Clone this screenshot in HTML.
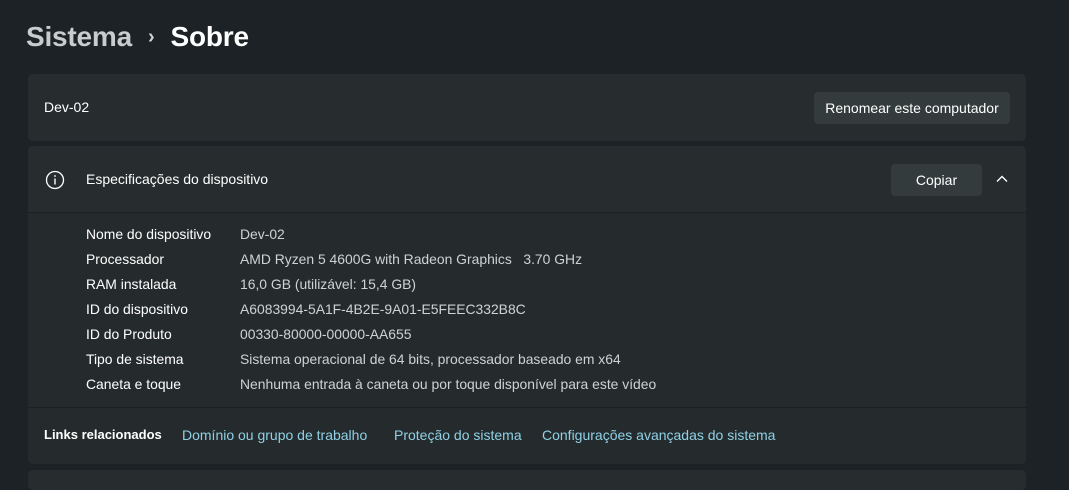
<!DOCTYPE html>
<html><head><meta charset="utf-8"><style>
*{margin:0;padding:0;box-sizing:border-box}
body{width:1069px;height:477px;background:#1c2225;font-family:"Segoe UI","Liberation Sans",sans-serif;color:#fff;position:relative;overflow:hidden;font-size:14px}
.bc{position:absolute;top:21px;left:26px;font-size:28px;font-weight:600;letter-spacing:-0.2px}
.card{position:absolute;left:28px;width:998px;background:#272d2f;border-radius:5px}
.btn{position:absolute;background:#343b3c;border-radius:4px;font-size:14px;text-align:center;color:#fff}
.row{position:absolute;left:58px;font-size:13.9px;color:#fff}
.row span{position:absolute;left:154px;white-space:nowrap;color:#cfd2d3}
.row b{font-weight:normal;white-space:nowrap}
.lk{position:absolute;top:427px;font-size:14px;color:#8fd0e6;white-space:nowrap}
</style></head><body>
<div class="bc"><span style="color:#c9cbcc">Sistema</span><span style="color:#d0d0d0;font-size:20px;position:relative;top:-3px;margin:0 16px 0 16px">›</span>Sobre</div>
<div class="card" style="top:74px;height:67px">
 <div style="position:absolute;left:16px;top:25px;font-size:14px">Dev-02</div>
 <div class="btn" style="left:786px;top:18px;width:196px;height:32px;line-height:32px">Renomear este computador</div>
</div>
<div class="card" style="top:146px;height:318px;background:#252b2d">
 <div style="position:absolute;left:0;top:0;width:998px;height:67px;background:#272d2f;border-bottom:1px solid #1b2022;border-radius:5px 5px 0 0"></div>
 <svg style="position:absolute;left:17px;top:24px" width="20" height="20" viewBox="0 0 20 20"><circle cx="10" cy="10" r="8.5" fill="none" stroke="#fff" stroke-width="1.3"/><line x1="10" y1="8.5" x2="10" y2="14.5" stroke="#fff" stroke-width="1.4"/><circle cx="10" cy="6" r="0.9" fill="#fff"/></svg>
 <div style="position:absolute;left:58px;top:25px;font-size:14px">Especificações do dispositivo</div>
 <div class="btn" style="left:863px;top:18px;width:91px;height:32px;line-height:32px">Copiar</div>
 <svg style="position:absolute;left:967px;top:28px" width="14" height="10" viewBox="0 0 14 10"><path d="M2 7.5L7 2.5L12 7.5" fill="none" stroke="#fff" stroke-width="1.4"/></svg>
 <div style="position:absolute;left:0;top:261px;width:998px;height:1px;background:#1b2022"></div>
</div>
<div class="row" style="top:226px;left:86px"><b>Nome do dispositivo</b><span>Dev-02</span></div>
<div class="row" style="top:251px;left:86px"><b>Processador</b><span>AMD Ryzen 5 4600G with Radeon Graphics&nbsp;&nbsp;&nbsp;3.70 GHz</span></div>
<div class="row" style="top:276px;left:86px"><b>RAM instalada</b><span>16,0 GB (utilizável: 15,4 GB)</span></div>
<div class="row" style="top:301px;left:86px"><b>ID do dispositivo</b><span>A6083994-5A1F-4B2E-9A01-E5FEEC332B8C</span></div>
<div class="row" style="top:326px;left:86px"><b>ID do Produto</b><span>00330-80000-00000-AA655</span></div>
<div class="row" style="top:351px;left:86px"><b>Tipo de sistema</b><span>Sistema operacional de 64 bits, processador baseado em x64</span></div>
<div class="row" style="top:376px;left:86px"><b>Caneta e toque</b><span>Nenhuma entrada à caneta ou por toque disponível para este vídeo</span></div>
<div style="position:absolute;left:44px;top:427px;font-size:13px;font-weight:bold">Links relacionados</div>
<div class="lk" style="left:182px">Domínio ou grupo de trabalho</div>
<div class="lk" style="left:394px">Proteção do sistema</div>
<div class="lk" style="left:542px">Configurações avançadas do sistema</div>
<div class="card" style="top:470px;height:20px"></div>
</body></html>
